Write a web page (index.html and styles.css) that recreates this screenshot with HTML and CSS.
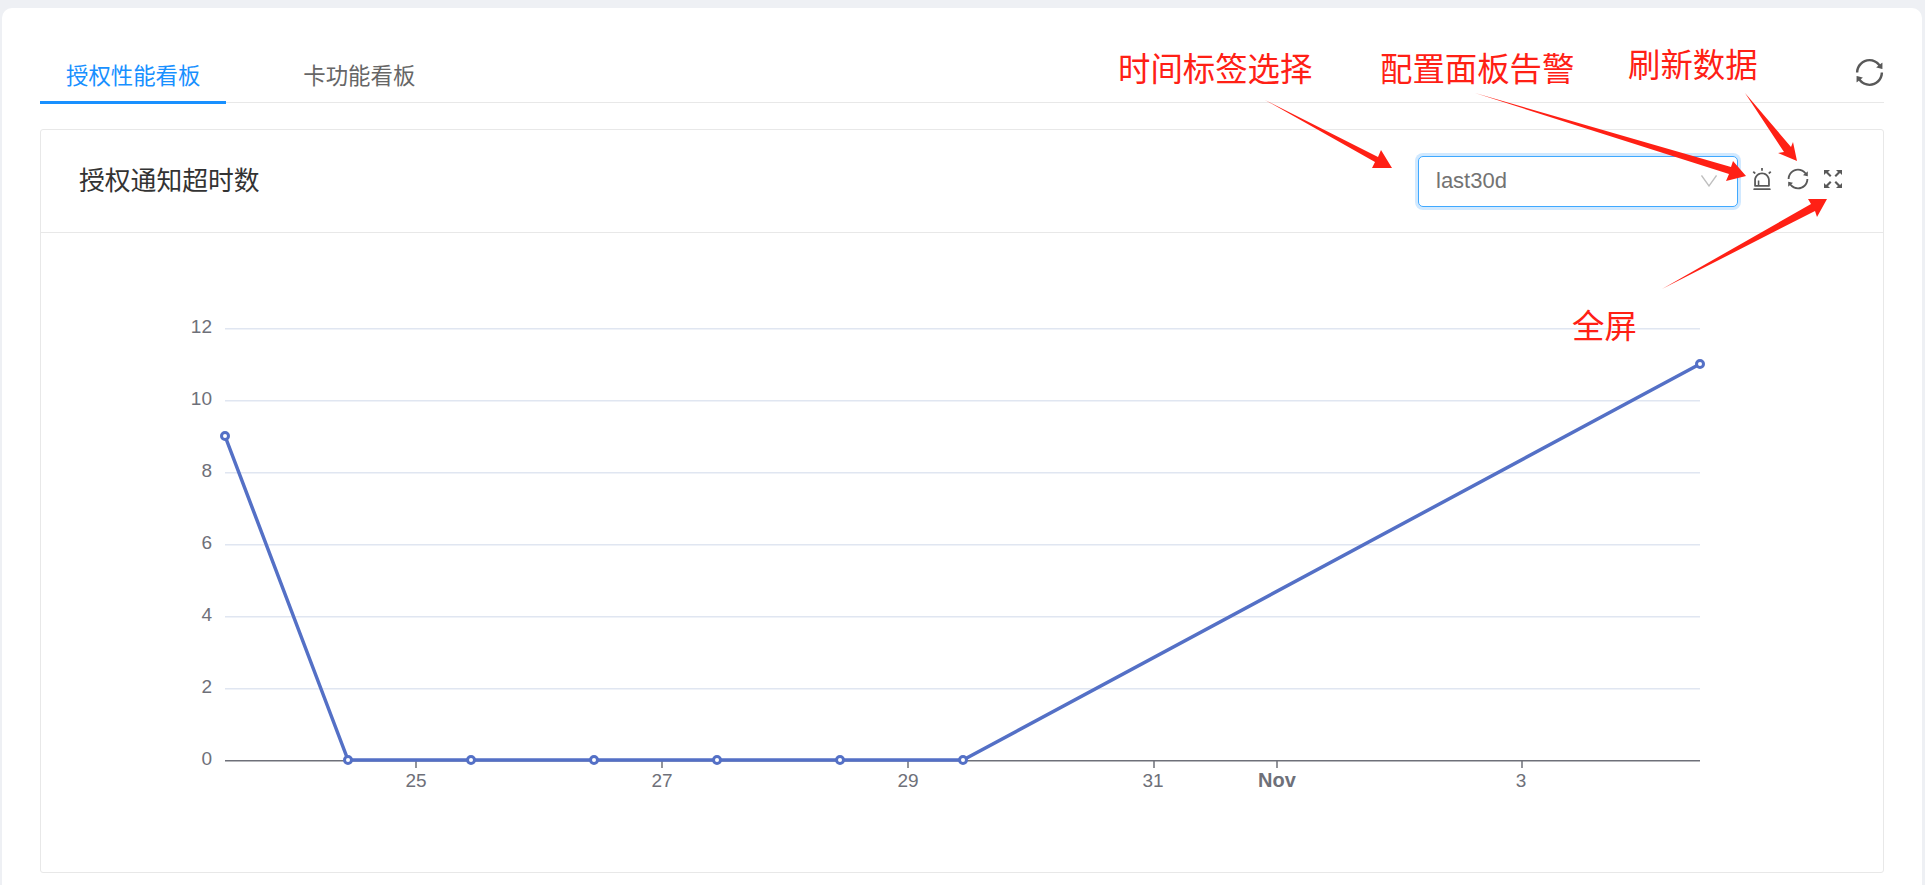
FILE: index.html
```html
<!DOCTYPE html>
<html lang="zh-CN">
<head>
<meta charset="utf-8">
<title>授权性能看板</title>
<link rel="stylesheet" href="styles.css">
</head>
<body>
<main class="card">
  <div class="tabbar">
    <div class="tab tab-active">授权性能看板</div>
    <div class="tab">卡功能看板</div>
    <svg class="icon icon-reload" viewBox="64 64 896 896"><path d="M168 504.2c1-43.7 10-86.1 26.9-126 17.3-41 42.1-77.7 73.7-109.4S337 212.3 378 195c42.4-17.9 87.4-27 133.9-27s91.5 9.1 133.8 27A341.5 341.5 0 0 1 755 268.8c9.9 9.9 19.2 20.4 27.8 31.4l-60.2 47a8 8 0 0 0 3 14.1l175.7 43c5 1.2 9.9-2.6 9.9-7.7l.8-180.9c0-6.7-7.7-10.5-12.9-6.3l-56.4 44.1C765.8 155.1 646.2 92 511.8 92 282.7 92 96.3 275.6 92 503.8a8 8 0 0 0 8 8.2h60c4.4 0 7.9-3.5 8-7.8zm756 7.8h-60c-4.4 0-7.9 3.5-8 7.8-1 43.7-10 86.1-26.9 126-17.3 41-42.1 77.8-73.7 109.4A342.45 342.45 0 0 1 512.1 856a342.24 342.24 0 0 1-243.2-100.8c-9.9-9.9-19.2-20.4-27.8-31.4l60.2-47a8 8 0 0 0-3-14.1l-175.7-43c-5-1.2-9.9 2.6-9.9 7.7l-.7 181c0 6.7 7.7 10.5 12.9 6.3l56.4-44.1C258.2 868.9 377.8 932 512.2 932c229.2 0 415.5-183.7 419.8-411.8a8 8 0 0 0-8-8.2z"/></svg>
  </div>
  <section class="panel">
    <header class="panel-head">
      <h2 class="panel-title">授权通知超时数</h2>
      <div class="select">
        <span>last30d</span>
        <svg class="chevron" viewBox="0 0 16 12"><polyline points="0.5,0.5 8,11 15.5,0.5"/></svg>
      </div>
      <div class="tools">
        <svg class="icon tool tool-alert" viewBox="64 64 896 896"><path d="M193 796c0 17.7 14.3 32 32 32h574c17.7 0 32-14.3 32-32V563c0-176.2-142.8-319-319-319S193 386.8 193 563v233zm72-233c0-136.4 110.6-247 247-247s247 110.6 247 247v193H404V585c0-5.5-4.5-10-10-10h-44c-5.5 0-10 4.5-10 10v171h-75V563zm-48.1-252.5l39.6-39.6c3.1-3.1 3.1-8.2 0-11.3l-67.9-67.9a8.03 8.03 0 0 0-11.3 0l-39.6 39.6a8.03 8.03 0 0 0 0 11.3l67.9 67.9c3.1 3.1 8.1 3.1 11.3 0zm669.6-79.2l-39.6-39.6a8.03 8.03 0 0 0-11.3 0l-67.9 67.9a8.03 8.03 0 0 0 0 11.3l39.6 39.6c3.1 3.1 8.2 3.1 11.3 0l67.9-67.9c3.1-3.2 3.1-8.2 0-11.3zM832 892H192c-17.7 0-32 14.3-32 32v24c0 4.4 3.6 8 8 8h688c4.4 0 8-3.6 8-8v-24c0-17.7-14.3-32-32-32zM484 180h56c4.4 0 8-3.6 8-8V76c0-4.4-3.6-8-8-8h-56c-4.4 0-8 3.6-8 8v96c0 4.4 3.6 8 8 8z"/></svg>
        <svg class="icon tool tool-sync" viewBox="64 64 896 896"><path d="M168 504.2c1-43.7 10-86.1 26.9-126 17.3-41 42.1-77.7 73.7-109.4S337 212.3 378 195c42.4-17.9 87.4-27 133.9-27s91.5 9.1 133.8 27A341.5 341.5 0 0 1 755 268.8c9.9 9.9 19.2 20.4 27.8 31.4l-60.2 47a8 8 0 0 0 3 14.1l175.7 43c5 1.2 9.9-2.6 9.9-7.7l.8-180.9c0-6.7-7.7-10.5-12.9-6.3l-56.4 44.1C765.8 155.1 646.2 92 511.8 92 282.7 92 96.3 275.6 92 503.8a8 8 0 0 0 8 8.2h60c4.4 0 7.9-3.5 8-7.8zm756 7.8h-60c-4.4 0-7.9 3.5-8 7.8-1 43.7-10 86.1-26.9 126-17.3 41-42.1 77.8-73.7 109.4A342.45 342.45 0 0 1 512.1 856a342.24 342.24 0 0 1-243.2-100.8c-9.9-9.9-19.2-20.4-27.8-31.4l60.2-47a8 8 0 0 0-3-14.1l-175.7-43c-5-1.2-9.9 2.6-9.9 7.7l-.7 181c0 6.7 7.7 10.5 12.9 6.3l56.4-44.1C258.2 868.9 377.8 932 512.2 932c229.2 0 415.5-183.7 419.8-411.8a8 8 0 0 0-8-8.2z"/></svg>
        <svg class="icon tool" viewBox="0 0 20 20"><path d="M1 1H7L5 3 8.500 6.500 7 8 3 4 1 6zM19 1H13L15 3 11.500 6.500 13 8 17 4 19 6zM1 19H7L5 17 8.500 13.500 7 12 3 16 1 14zM19 19H13L15 17 11.500 13.500 13 12 17 16 19 14z"/></svg>
      </div>
    </header>
    <svg class="chart" viewBox="41 233 1842 638">
      <g class="grid">
        <line x1="225" x2="1700" y1="328.700" y2="328.700"/>
        <line x1="225" x2="1700" y1="400.700" y2="400.700"/>
        <line x1="225" x2="1700" y1="472.700" y2="472.700"/>
        <line x1="225" x2="1700" y1="544.700" y2="544.700"/>
        <line x1="225" x2="1700" y1="616.700" y2="616.700"/>
        <line x1="225" x2="1700" y1="688.700" y2="688.700"/>
      </g>
      <line class="axis" x1="225" x2="1700" y1="760.700" y2="760.700"/>
      <g class="ticks">
        <line x1="416" x2="416" y1="761" y2="768"/>
        <line x1="662" x2="662" y1="761" y2="768"/>
        <line x1="908" x2="908" y1="761" y2="768"/>
        <line x1="1154" x2="1154" y1="761" y2="768"/>
        <line x1="1277" x2="1277" y1="761" y2="768"/>
        <line x1="1522" x2="1522" y1="761" y2="768"/>
      </g>
      <g class="ylabels">
        <text x="212" y="333">12</text>
        <text x="212" y="405">10</text>
        <text x="212" y="477">8</text>
        <text x="212" y="549">6</text>
        <text x="212" y="621">4</text>
        <text x="212" y="693">2</text>
        <text x="212" y="765">0</text>
      </g>
      <g class="xlabels">
        <text x="416" y="787">25</text>
        <text x="662" y="787">27</text>
        <text x="908" y="787">29</text>
        <text x="1153" y="787">31</text>
        <text class="month" x="1277" y="787">Nov</text>
        <text x="1521" y="787">3</text>
      </g>
      <polyline class="series" points="225,436 348,760 471,760 594,760 717,760 840,760 963,760 1700,364"/>
      <g class="dots">
        <circle cx="225" cy="436" r="3.500"/>
        <circle cx="348" cy="760" r="3.500"/>
        <circle cx="471" cy="760" r="3.500"/>
        <circle cx="594" cy="760" r="3.500"/>
        <circle cx="717" cy="760" r="3.500"/>
        <circle cx="840" cy="760" r="3.500"/>
        <circle cx="963" cy="760" r="3.500"/>
        <circle cx="1700" cy="364" r="3.500"/>
      </g>
    </svg>
  </section>
</main>
<svg class="notes" viewBox="0 0 1925 885">
  <text x="1118" y="81">时间标签选择</text>
  <text x="1380" y="81">配置面板告警</text>
  <text x="1628" y="77">刷新数据</text>
  <text x="1572" y="338">全屏</text>
  <polygon points="1265,100 1378,157 1381,150 1392,168 1372,168 1375,162"/>
  <polygon points="1475,93 1731,167 1733,161 1746,176 1726,181 1729,174"/>
  <polygon points="1745,93 1791,147 1793,142 1797,161 1778,153 1784,152"/>
  <polygon points="1662,289 1811,204 1808,199 1827,199 1817,217 1815,211"/>
</svg>
</body>
</html>
```

FILE: styles.css
```css
* {
  box-sizing: border-box;
}

html,
body {
  margin: 0;
  height: 885px;
  overflow: hidden;
}

body {
  position: relative;
  padding: 8px 3px 0 2px;
  background: #eef0f4;
  font-family: "Liberation Sans", "Noto Sans CJK SC", sans-serif;
}

.card {
  height: 877px;
  padding: 28px 38px 0;
  background: #fff;
  border-radius: 10px 10px 0 0;
}

.tabbar {
  display: flex;
  align-items: flex-start;
  height: 67px;
  border-bottom: 1px solid #e8e8e8;
}

.tab {
  height: 68px;
  margin-right: 51px;
  padding: 15px 26px 0;
  font-size: 22.400px;
  line-height: 52px;
  color: #666;
}

.tab-active {
  color: #1890ff;
  border-bottom: 3px solid #1890ff;
}

.icon {
  display: block;
  fill: #595959;
}

.icon-reload {
  width: 29px;
  height: 29px;
  margin: 22px 0 0 auto;
}

.panel {
  margin-top: 26px;
  height: 744px;
  background: #fff;
  border: 1px solid #e8e8e8;
  border-radius: 3px;
}

.panel-head {
  display: flex;
  align-items: center;
  height: 103px;
  padding: 0 40px 5px 38px;
  border-bottom: 1px solid #e8e8e8;
}

.panel-title {
  margin: 0 auto 0 0;
  font-size: 25.800px;
  font-weight: 400;
  color: #333;
}

.select {
  display: flex;
  align-items: center;
  justify-content: space-between;
  width: 320px;
  height: 51px;
  margin-top: 5px;
  padding: 0 20px 0 17px;
  font-size: 22px;
  color: #737373;
  background: #fff;
  border: 1px solid #40a9ff;
  border-radius: 5px;
  box-shadow: 0 0 0 3px rgba(24, 144, 255, 0.2);
}

.chevron {
  display: block;
  width: 16px;
  height: 12px;
  fill: none;
  stroke: #bfbfbf;
  stroke-width: 1.300;
}

.tools {
  display: flex;
  align-items: center;
  gap: 14px;
  margin: 1px 0 0 13px;
}

.tool {
  width: 20px;
  height: 20px;
}

.tool-alert {
  width: 22px;
  height: 22px;
}

.tool-sync {
  width: 22px;
  height: 22px;
}

.chart {
  display: block;
  width: 1842px;
  height: 638px;
}

.grid line {
  stroke: #e0e6f1;
  stroke-width: 1.500;
}

.axis,
.ticks line {
  stroke: #6e7079;
  stroke-width: 1.500;
}

.ylabels text,
.xlabels text {
  font-family: "Liberation Sans", sans-serif;
  font-size: 19px;
  fill: #6e7079;
}

.ylabels text {
  text-anchor: end;
}

.xlabels text {
  text-anchor: middle;
}

.xlabels .month {
  font-size: 20px;
  font-weight: 700;
}

.series {
  fill: none;
  stroke: #5470c6;
  stroke-width: 3.500;
  stroke-linejoin: round;
}

.dots circle {
  fill: #fff;
  stroke: #5470c6;
  stroke-width: 3;
}

.notes {
  position: absolute;
  left: 0;
  top: 0;
  width: 1925px;
  height: 885px;
  pointer-events: none;
}

.notes text {
  font-family: "Noto Sans CJK SC", sans-serif;
  font-size: 32.400px;
  fill: #ff2015;
}

.notes polygon {
  fill: #ff2015;
}
```
